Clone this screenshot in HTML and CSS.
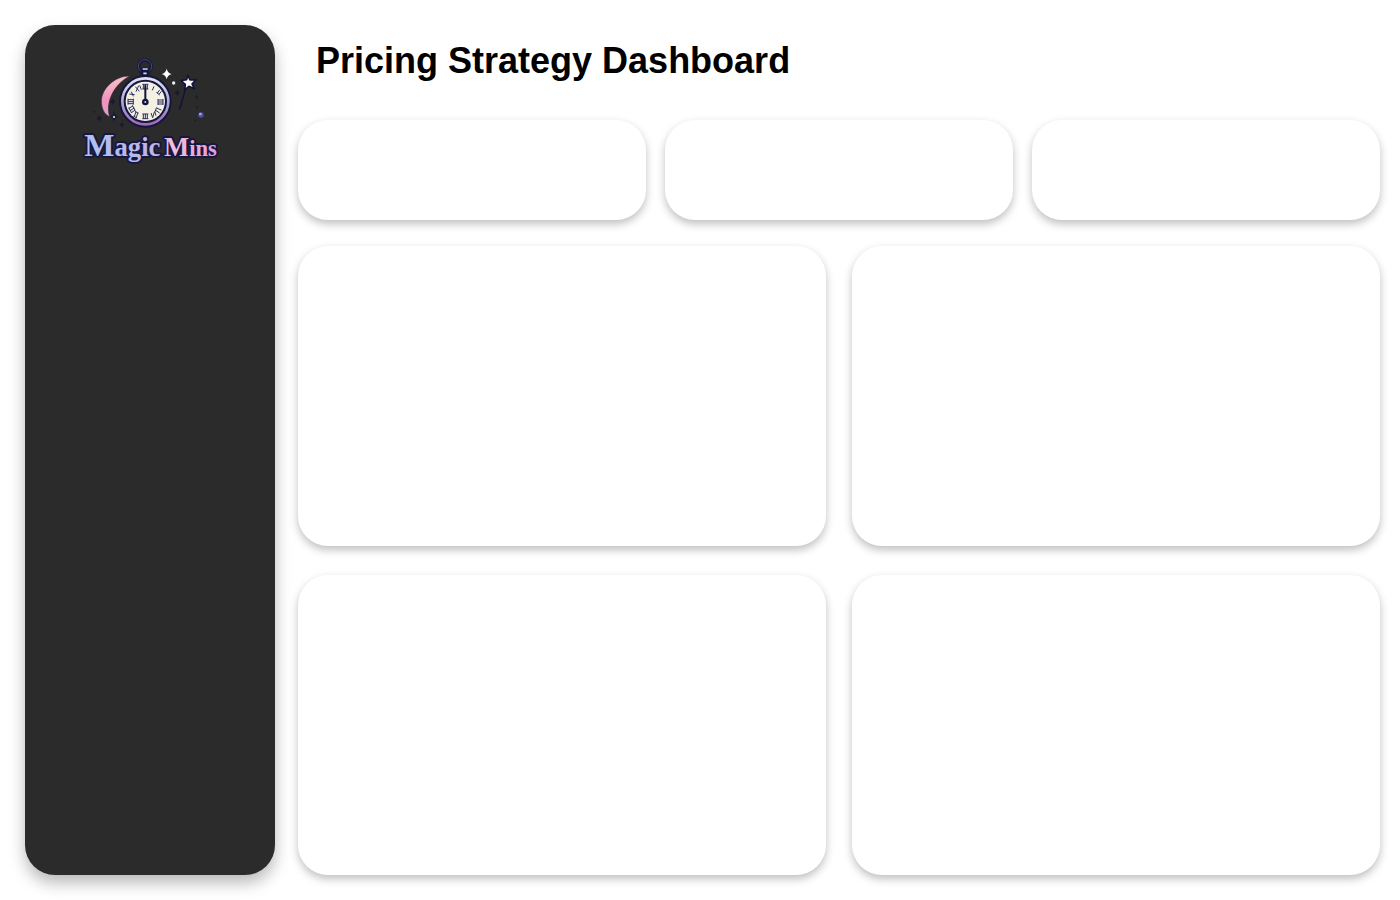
FILE: index.html
```html
<!DOCTYPE html>
<html lang="en">
<head>
<meta charset="utf-8">
<meta name="viewport" content="width=device-width, initial-scale=1">
<title>Pricing Strategy Dashboard</title>
<link rel="stylesheet" href="styles.css">
</head>
<body>
<div class="layout">
  <aside class="sidebar">
    <svg class="logo" viewBox="0 0 450 360" role="img" aria-label="Magic Mins">
      <defs>
        <linearGradient id="word" gradientUnits="userSpaceOnUse" x1="30" y1="0" x2="424" y2="0">
          <stop offset="0" stop-color="#aec2f4"/>
          <stop offset=".35" stop-color="#b8b9ec"/>
          <stop offset=".56" stop-color="#c5b0e0"/>
          <stop offset=".66" stop-color="#f3bfdf"/>
          <stop offset="1" stop-color="#e49cd2"/>
        </linearGradient>
        <linearGradient id="rim" x1="0" y1="0" x2="0" y2="1">
          <stop offset="0" stop-color="#dfe0f4"/>
          <stop offset=".6" stop-color="#a6a0cf"/>
          <stop offset="1" stop-color="#a368b8"/>
        </linearGradient>
        <linearGradient id="moon" x1="0" y1="0" x2="0" y2="1">
          <stop offset="0" stop-color="#f8c3c8"/>
          <stop offset=".6" stop-color="#ee93bd"/>
          <stop offset="1" stop-color="#dba0cb"/>
        </linearGradient>
      </defs>
      <path d="M164 78C120 77 80 116 79 152C79 176 88 194 104 200C92 160 112 107 164 78Z" fill="url(#moon)" stroke="#34243a" stroke-width="2"/>
      <g class="ink-dust">
        <path d="M113 144q2 9 9 11q-7 2-9 11q-2-9-9-11q7-2 9-11zM117 184q3 13 13 16q-10 3-13 16q-3-13-13-16q10-3 13-16zM73 195q2 8 8 10q-6 2-8 10q-2-8-8-10q6-2 8-10zM141 215q2 7 8 9q-6 2-8 9q-2-7-8-9q6-2 8-9zM307 118q2 8 9 10q-7 2-9 10q-2-8-9-10q7-2 9-10z"/>
        <circle cx="58" cy="185" r="3"/><circle cx="365" cy="141" r="4"/><circle cx="366" cy="172" r="3"/><circle cx="361" cy="211" r="3"/>
      </g>
      <circle cx="117" cy="201" r="3" fill="#eef"/>
      <circle cx="210" cy="49" r="19" fill="none" stroke="#14163c" stroke-width="10"/>
      <circle cx="210" cy="49" r="20" fill="none" stroke="#5d6595" stroke-width="2"/>
      <path d="M197 76V57q13-12 26 0v19z" fill="#15173d"/>
      <path d="M203 57h15M205 70h10" stroke="#d2d5ee" stroke-width="5"/>
      <circle cx="211" cy="154" r="79" fill="#14163c"/>
      <circle cx="211" cy="154" r="69" fill="#15173d" stroke="url(#rim)" stroke-width="8"/>
      <circle cx="211" cy="154" r="59" fill="#f4f0e4"/>
      <g class="numerals">
        <path d="M205 103v14M211 103v14M217 103v14M202 103h18M202 117h18"/>
        <path d="M232 121l5-12"/>
        <path d="M247 129l7-9M252 133l7-9M244 127l10 8"/>
        <path d="M249 150h15M249 156h15M249 162h15M249 147v18M264 147v18"/>
        <path d="M246 175l13 5M242 181l12 8M245 172l-5 13"/>
        <path d="M228 189l5 14l5-17M239 184l4 13"/>
        <path d="M205 192v14M211 192v14M217 192v14M202 192h18M202 206h18"/>
        <path d="M183 185l-5 15M189 187l-5 15M180 184l10 6M175 198l11 6"/>
        <path d="M174 168l-13 7M178 174l-13 8M181 180l-12 8M172 166l8 15M161 173l9 16"/>
        <path d="M159 149h16M159 155h16M159 161h16M159 146v18M175 146v18"/>
        <path d="M163 132l16 2M169 125l6 14"/>
        <path d="M181 110l12 14M191 107l-8 18M194 106l5 13"/>
      </g>
      <path d="M211 154V108" stroke="#11163a" stroke-width="6" stroke-linecap="round"/>
      <circle cx="211" cy="156" r="10" fill="#11163a"/><circle cx="211" cy="156" r="3" fill="#d9d3d0"/>
      <path d="M275 56q3 13 15 16q-12 3-15 16q-3-13-15-16q12-3 15-16z" fill="#fff"/>
      <circle cx="296" cy="99" r="5" fill="#eee"/>
      <path d="M334 108L314 177" stroke="#12143a" stroke-width="5" stroke-linecap="round"/>
      <path d="M338 76l7 14 18-1-12 13 7 14-16-7-13 10 2-16-13-11 17-3z" fill="#fff" stroke="#12143a" stroke-width="5" stroke-linejoin="round"/>
      <circle cx="378" cy="195" r="8" fill="#514fa8"/><circle cx="376" cy="192" r="4" fill="#a6a6f4"/>
      <g class="wordmark">
        <text x="28" y="319"><tspan class="initial">M</tspan>agic</text>
        <text x="267" y="319" class="second"><tspan class="initial">M</tspan>ins</text>
      </g>
    </svg>
  </aside>
  <main class="content">
    <h1 class="title">Pricing Strategy Dashboard</h1>
    <div class="metrics">
      <section class="card"></section>
      <section class="card"></section>
      <section class="card"></section>
    </div>
    <div class="charts">
      <section class="card"></section>
      <section class="card"></section>
      <section class="card"></section>
      <section class="card"></section>
    </div>
  </main>
</div>
</body>
</html>
```
FILE: styles.css
```css
* {
  box-sizing: border-box;
}

body {
  margin: 0;
  background: #fff;
  color: #000;
  font-family: Arial, "Liberation Sans", sans-serif;
}

.layout {
  display: flex;
  gap: 23px;
  min-height: 100vh;
  padding: 25px 20px 25px 25px;
}

.sidebar {
  flex: 0 0 250px;
  display: flex;
  justify-content: center;
  align-items: flex-start;
  padding-top: 25px;
  border-radius: 30px;
  background: #2b2b2b;
  box-shadow: 0 8px 16px rgba(0, 0, 0, 0.28);
}

.logo {
  width: 150px;
  height: 120px;
}

.ink-dust {
  fill: #191934;
}

.numerals {
  fill: none;
  stroke: #2b315c;
  stroke-width: 3px;
}

.wordmark {
  fill: url(#word);
  stroke: #17183f;
  stroke-width: 12px;
  stroke-linejoin: round;
  paint-order: stroke;
  font-family: "Liberation Serif", serif;
  font-weight: 700;
  font-size: 80px;
}

.wordmark .initial {
  font-size: 96px;
}

.wordmark .second {
  font-size: 68px;
}

.wordmark .second .initial {
  font-size: 80px;
}

.content {
  flex: 1;
  min-width: 0;
  display: flex;
  flex-direction: column;
}

.title {
  margin: 0;
  padding: 16px 18px 39px;
  font-size: 36px;
  line-height: 40px;
}

.metrics {
  display: grid;
  grid-template-columns: repeat(3, 1fr);
  grid-auto-rows: 100px;
  gap: 19px;
  margin-bottom: 26px;
}

.charts {
  flex: 1;
  display: grid;
  grid-template-columns: repeat(2, 1fr);
  grid-auto-rows: minmax(300px, 1fr);
  gap: 29px 26px;
}

.card {
  border-radius: 30px;
  background: #fff;
  box-shadow: 0 4px 8px rgba(0, 0, 0, 0.25);
}
```
